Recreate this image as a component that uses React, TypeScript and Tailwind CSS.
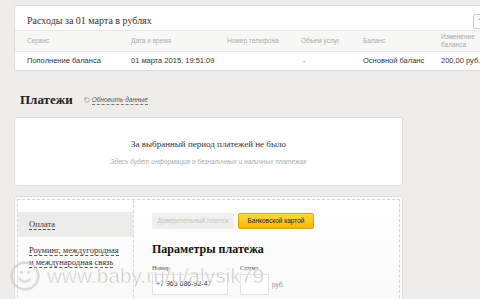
import { RotateCw } from 'lucide-react'

const serif = "font-['Liberation_Serif','DejaVu_Serif',serif]"
const sans = "font-['Liberation_Sans',Arial,sans-serif]"

export default function App() {
  return (
    <div className={`relative w-[480px] h-[299px] overflow-hidden bg-[#eeede9] ${sans}`}>
      {/* Расходы */}
      <div className="ml-[14px] mt-[5px] w-[480px] bg-white border border-[#dddcd7] rounded-[3px]">
        <div className="h-[24px] flex items-center justify-between pl-[12px]">
          <span className={`${serif} text-[10px] text-[#333] pt-[5px]`}>Расходы за 01 марта в рублях</span>
          <div className="mr-[4px] mt-[6px] w-[16px] h-[15px] border border-[#c8c8c4] rounded-[2px] bg-white flex items-center justify-center text-[9px] text-[#444]">
            +
          </div>
        </div>
        <div className="grid grid-cols-[104px_96px_74px_62px_78px_1fr] pl-[12px] h-[22px] items-center bg-[#f7f7f5] border-y border-[#e6e6e2] text-[6.5px] text-[#aaa]">
          <span>Сервис</span>
          <span>Дата и время</span>
          <span>Номер телефона</span>
          <span>Объем услуг</span>
          <span>Баланс</span>
          <span className="leading-[8px]">Изменение<br />баланса</span>
        </div>
        <div className="grid grid-cols-[104px_96px_74px_62px_78px_1fr] pl-[12px] h-[18px] items-center text-[7.5px] text-[#333]">
          <span>Пополнение баланса</span>
          <span>01 марта 2015, 19:51:09</span>
          <span></span>
          <span className="text-[#888] pl-[2px]">-</span>
          <span>Основной баланс</span>
          <span>200,00 руб.</span>
        </div>
      </div>

      {/* Платежи */}
      <div className="flex items-center ml-[20px] mt-[20px] h-[18px]">
        <h2 className={`${serif} text-[13px] font-bold text-[#222]`}>Платежи</h2>
        <div className="flex items-center ml-[11px] text-[6.5px] italic text-[#555]">
          <RotateCw size={6} className="text-[#777] mr-[2px] -scale-x-100" />
          <span className="border-b border-dashed border-[#777] leading-[8px]">Обновить данные</span>
        </div>
      </div>

      <div className="ml-[14px] mt-[8px] w-[389px] h-[69px] bg-white border border-[#dfded9] rounded-[3px] flex flex-col items-center justify-center">
        <p className={`${serif} text-[9px] text-[#333] mt-[2px]`}>За выбранный период платежей не было</p>
        <p className="text-[6.5px] italic text-[#aaa] mt-[5px]">Здесь будет информация о безналичных и наличных платежах</p>
      </div>

      {/* Оплата */}
      <div className="ml-[14px] mt-[10px] w-[389px] h-[120px] bg-white border border-[#dfded9] rounded-[3px] p-[2px]">
        <div className="flex h-full border border-dashed border-[#d6d6d2] bg-gradient-to-b from-white to-[#f8f8f7]">
          <div className="w-[116px] border-r border-dashed border-[#d6d6d2] pt-[12px]">
            <div className="h-[25px] bg-[#ebebea] flex items-center pl-[11px]">
              <span className={`${serif} text-[8.5px] text-[#333] border-b border-dashed border-[#555] leading-[9px]`}>Оплата</span>
            </div>
            <div className={`${serif} pl-[11px] mt-[7px] text-[8.5px] text-[#333] leading-[12px]`}>
              <span className="border-b border-dashed border-[#555]">Роуминг, междугородная</span>
              <br />
              <span className="border-b border-dashed border-[#555]">и международная связь</span>
            </div>
          </div>
          <div className="flex-1 pl-[18px] pt-[13px]">
            <div className="flex gap-[4px]">
              <div className="h-[16px] w-[82px] rounded-[2px] bg-[#efefed] flex items-center justify-center text-[6.5px] text-[#c4c4c0]">
                Доверительный платеж
              </div>
              <div className="h-[16px] w-[76px] rounded-[2px] border border-[#e3a400] bg-gradient-to-b from-[#ffd93a] to-[#f7b700] flex items-center justify-center text-[6.5px] text-[#222]">
                Банковской картой
              </div>
            </div>
            <h3 className={`${serif} mt-[11px] text-[12px] font-bold text-[#111]`}>Параметры платежа</h3>
            <div className="flex mt-[5px] items-end">
              <div>
                <div className={`${serif} text-[6.5px] text-[#555]`}>Номер</div>
                <div className="mt-[1px] w-[76px] h-[21px] border border-[#e2e2de] bg-white flex items-center pl-[3px] text-[7px] text-[#333]">
                  +7 963 686-92-47
                </div>
              </div>
              <div className="ml-[12px]">
                <div className={`${serif} text-[6.5px] text-[#555]`}>Сумма</div>
                <div className="mt-[1px] w-[29px] h-[21px] border border-[#e2e2de] bg-white" />
              </div>
              <span className="ml-[3px] mb-[5px] text-[6.5px] text-[#999]">руб.</span>
            </div>
            <div className="mt-[3px] text-[6px] text-[#999]">От 100 до 5 000 руб.</div>
          </div>
        </div>
      </div>

      {/* watermark */}
      <div className="absolute left-[9px] top-[260px] flex items-center pointer-events-none">
        <svg width="32" height="32" viewBox="0 0 36 36" className="opacity-60">
          <circle cx="18" cy="18" r="15" fill="none" stroke="#c9c9c9" strokeWidth="3" />
          <path d="M11 20c2 5 10 6 13 1" fill="none" stroke="#c9c9c9" strokeWidth="2.5" />
          <circle cx="14" cy="14" r="1.8" fill="#c9c9c9" />
          <circle cx="22" cy="14" r="1.8" fill="#c9c9c9" />
        </svg>
        <span className="ml-[6px] text-[20.5px] font-light text-[#b4b4b4]/75 tracking-[0.2px] [-webkit-text-stroke:0.5px_#ffffff]">
          www.baby.ru/u/alysik79
        </span>
      </div>
    </div>
  )
}
